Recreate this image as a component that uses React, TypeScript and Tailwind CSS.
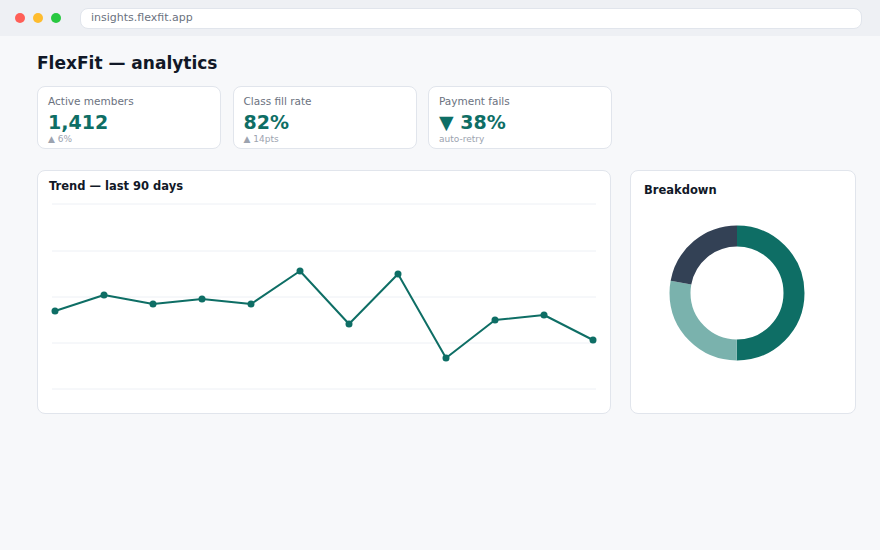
const points = [
  [55, 311], [104, 295], [153, 304], [202, 299], [251, 304], [300, 271],
  [349, 324], [398, 274], [446, 358], [495, 320], [544, 315], [593, 340],
];

const gridYs = [204, 251, 297, 343, 389];

type Kpi = { label: string; value: string; sub: string };

const kpis: Kpi[] = [
  { label: "Active members", value: "1,412", sub: "▲ 6%" },
  { label: "Class fill rate", value: "82%", sub: "▲ 14pts" },
  { label: "Payment fails", value: "▼ 38%", sub: "auto-retry" },
];

function KpiCard({ label, value, sub }: Kpi) {
  return (
    <div className="rounded-lg border border-[#e1e5ec] bg-white px-[10px] pt-[7px] pb-[3px]">
      <p className="text-[10.5px] leading-[14px] text-[#6b7280]">{label}</p>
      <p className="mt-[3px] text-[19px] font-bold leading-[22px] text-[#0e6e65]">{value}</p>
      <p className="text-[9px] leading-[12px] text-[#9ca3af]">{sub}</p>
    </div>
  );
}

function TrendChart() {
  // chart coords are page coords shifted by the card origin (38, 195)
  const pts = points.map(([x, y]) => [x - 38, y - 195]);
  return (
    <svg width="572" height="217" className="block">
      {gridYs.map((y) => (
        <line key={y} x1={14} x2={558} y1={y - 195} y2={y - 195} stroke="#edf0f5" strokeWidth="1" />
      ))}
      <polyline
        points={pts.map((p) => p.join(",")).join(" ")}
        fill="none"
        stroke="#0e6e65"
        strokeWidth="2"
        strokeLinejoin="round"
      />
      {pts.map(([x, y], i) => (
        <circle key={i} cx={x} cy={y} r="3.5" fill="#0e6e65" />
      ))}
    </svg>
  );
}

function Donut() {
  const r = 57;
  const c = 2 * Math.PI * r;
  const segs = [
    { frac: 0.5, color: "#0e6e65" },
    { frac: 0.278, color: "#7ab2ad" },
    { frac: 0.222, color: "#334155" },
  ];
  let offset = 0;
  return (
    <svg width="224" height="150" className="block">
      <g transform="rotate(-90 106 72)">
        {segs.map((s, i) => {
          const el = (
            <circle
              key={i}
              cx="106"
              cy="72"
              r={r}
              fill="none"
              stroke={s.color}
              strokeWidth="21"
              strokeDasharray={`${s.frac * c} ${c}`}
              strokeDashoffset={-offset * c}
            />
          );
          offset += s.frac;
          return el;
        })}
      </g>
    </svg>
  );
}

export default function App() {
  return (
    <div className="h-[550px] w-[880px] bg-[#f7f8fa] font-['DejaVu_Sans',sans-serif]">
      <div className="flex h-[36px] items-center bg-[#eef0f4] px-[15px]">
        <div className="flex gap-[8px]">
          <span className="h-[10px] w-[10px] rounded-full bg-[#ff5f57]" />
          <span className="h-[10px] w-[10px] rounded-full bg-[#febc2e]" />
          <span className="h-[10px] w-[10px] rounded-full bg-[#28c840]" />
        </div>
        <div className="ml-[19px] flex h-[21px] w-[782px] items-center rounded-lg border border-[#e1e5ec] bg-white px-[10px] text-[11px] text-[#6b7280]">
          insights.flexfit.app
        </div>
      </div>

      <div className="px-[37px] pt-[15px]">
        <h1 className="text-[17px] font-bold leading-[24px] text-[#111827]">FlexFit — analytics</h1>

        <div className="mt-[11px] grid w-[575px] grid-cols-3 gap-[11.5px]">
          {kpis.map((k) => (
            <KpiCard key={k.label} {...k} />
          ))}
        </div>

        <div className="mt-[21px] flex gap-[19px]">
          <div className="h-[244px] w-[574px] rounded-lg border border-[#e1e5ec] bg-white">
            <p className="px-[11px] pt-[7px] text-[11.5px] font-bold leading-[16px] text-[#111827]">
              Trend — last 90 days
            </p>
            <div className="mt-[1px]">
              <TrendChart />
            </div>
          </div>

          <div className="h-[244px] w-[226px] rounded-lg border border-[#e1e5ec] bg-white">
            <p className="px-[13px] pt-[11px] text-[11.5px] font-bold leading-[16px] text-[#111827]">
              Breakdown
            </p>
            <div className="mt-[23px]">
              <Donut />
            </div>
          </div>
        </div>
      </div>
    </div>
  );
}
